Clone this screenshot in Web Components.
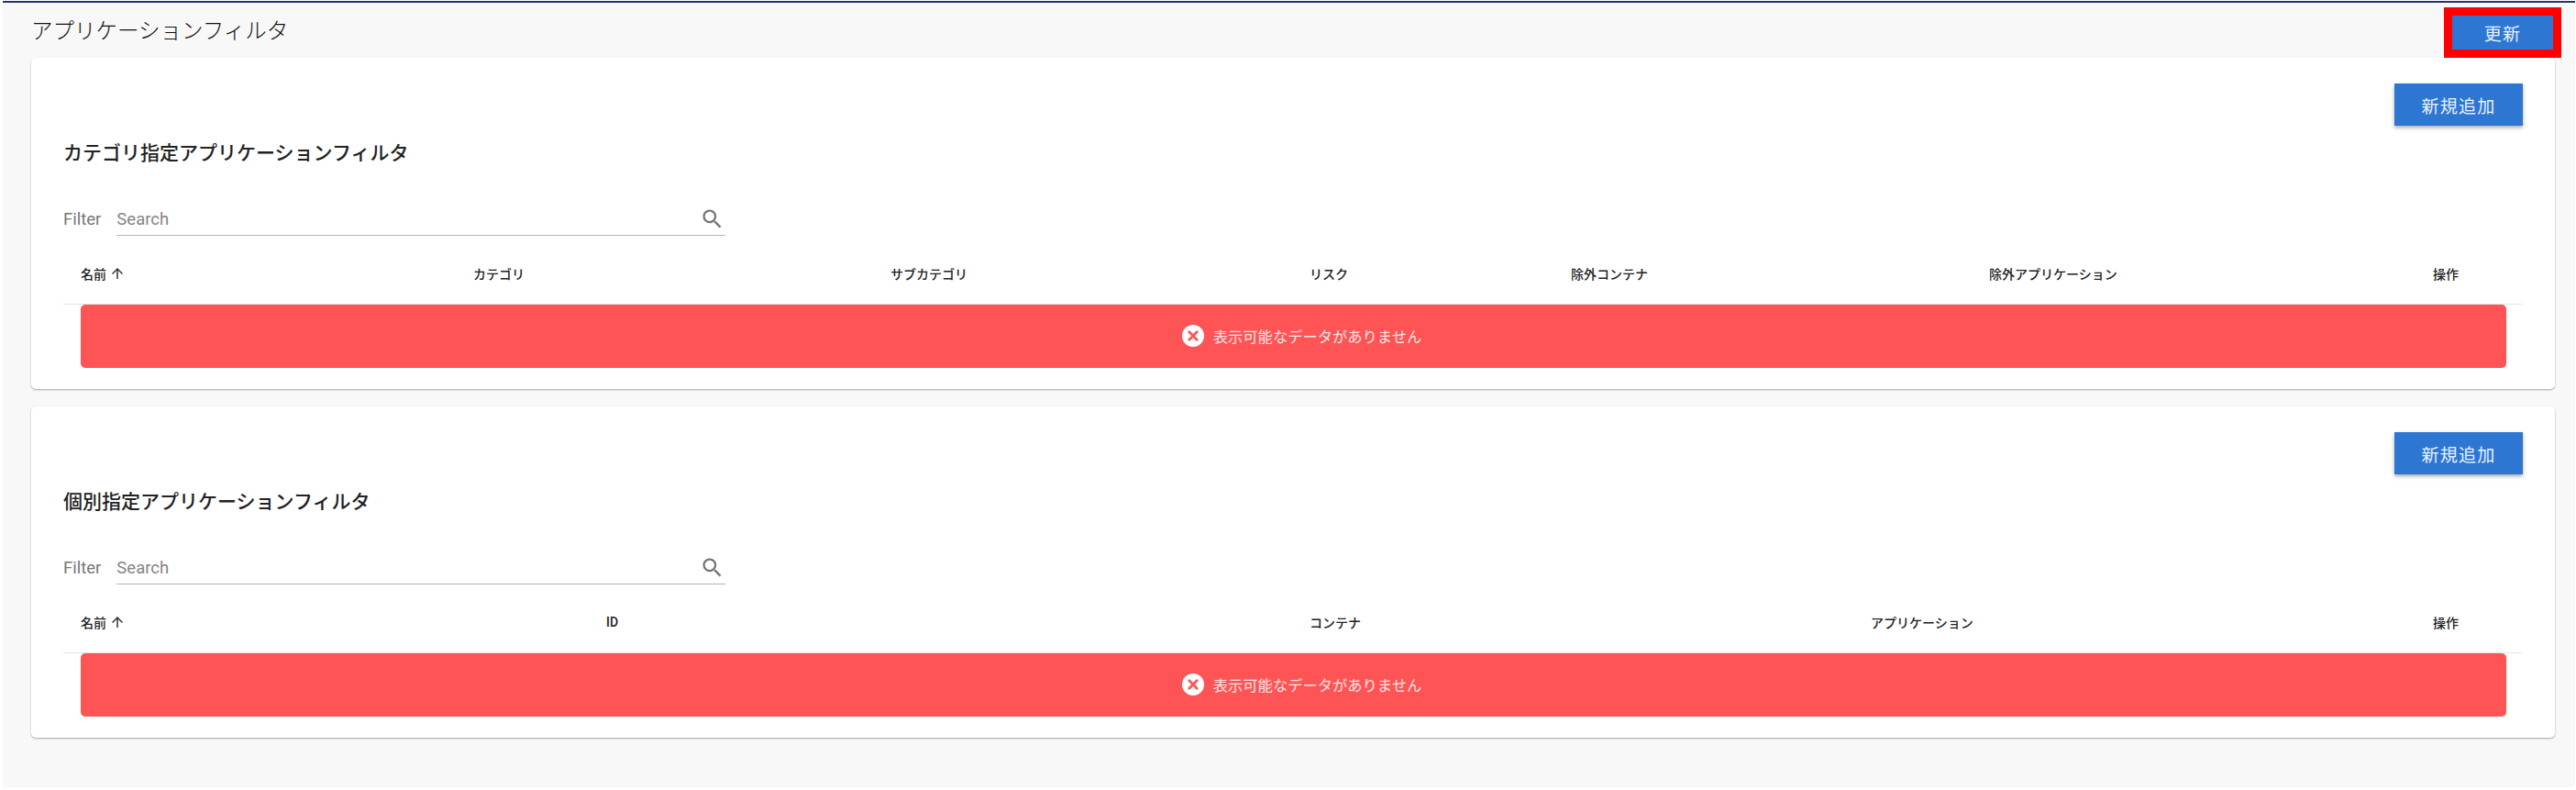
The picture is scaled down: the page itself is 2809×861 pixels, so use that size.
<!DOCTYPE html>
<html lang="ja">
<head>
<meta charset="utf-8">
<title>アプリケーションフィルタ</title>
<style>
    html, body
    {
        margin          : 0;
        background      : #ffffff;
        font-family     : Roboto, "Noto Sans CJK JP", sans-serif;
    }
</style>
</head>
<body>

<filter-page>
    <span slot="title">アプリケーションフィルタ</span>
    <primary-button slot="action" outlined>更新</primary-button>

    <filter-card heading="カテゴリ指定アプリケーションフィルタ">
        <data-table columns="428px 455px 457px 285px 456px 484px 1fr"
                    labels="名前,カテゴリ,サブカテゴリ,リスク,除外コンテナ,除外アプリケーション,操作"></data-table>
    </filter-card>

    <filter-card heading="個別指定アプリケーションフィルタ">
        <data-table columns="573px 767px 612px 613px 1fr"
                    labels="名前,ID,コンテナ,アプリケーション,操作"></data-table>
    </filter-card>
</filter-page>

<script>
class FilterPage extends HTMLElement
{
    constructor()
    {
        super();
        this.shadowDOM = this.attachShadow({mode:"open"});
        this.shadowDOM.innerHTML =
        `
        <style>
            :host
            {
                display         : block;
                height          : 857px;
                margin          : 1px 1px 0 3px;
                box-sizing      : border-box;
                border-top      : 2px solid #25326e;
                background      : #f8f8f8;
            }

            .head
            {
                display         : flex;
                justify-content : space-between;
                align-items     : flex-start;
                height          : 60px;
                box-sizing      : border-box;
                padding         : 5px 15px 0 31px;
            }

            .title
            {
                font-size       : 23.5px;
                font-weight     : 300;
                line-height     : 52px;
                color           : #111111;
            }

            .cards
            {
                display         : flex;
                flex-direction  : column;
                gap             : 19px;
                padding         : 0 22px 0 31px;
            }
        </style>

        <div class="head">
            <div class="title"><slot name="title"></slot></div>
            <slot name="action"></slot>
        </div>
        <div class="cards"><slot></slot></div>`;
    }
}

class PrimaryButton extends HTMLElement
{
    constructor()
    {
        super();
        this.shadowDOM = this.attachShadow({mode:"open"});
        this.shadowDOM.innerHTML =
        `
        <style>
            :host
            {
                display         : inline-flex;
                align-items     : center;
                justify-content : center;
                width           : 140px;
                height          : 46px;
                box-sizing      : border-box;
                background      : #2d77d3;
                color           : #e9f1fb;
                font-size       : 19px;
                letter-spacing  : 1.2px;
                box-shadow      : 0 2px 4px rgba(0,0,0,.35);
            }

            :host([outlined])
            {
                width           : 128px;
                height          : 55px;
                border          : 9px solid #ff0000;
                box-shadow      : none;
            }
        </style>
        <slot></slot>`;
    }
}

class FilterCard extends HTMLElement
{
    constructor()
    {
        super();
        this.shadowDOM = this.attachShadow({mode:"open"});
        this.shadowDOM.innerHTML =
        `
        <style>
            :host
            {
                display         : block;
                height          : 361px;
                box-sizing      : border-box;
                padding         : 28px 35px 0 35px;
                background      : #ffffff;
                border-radius   : 5px;
                box-shadow      : 0 1px 2px rgba(0,0,0,.35);
            }

            .actions
            {
                display         : flex;
                justify-content : flex-end;
            }

            h2
            {
                margin          : 15px 0 0 0;
                font-size       : 21px;
                font-weight     : 500;
                line-height     : 30px;
                color           : #222222;
            }
        </style>

        <div class="actions"><primary-button>新規追加</primary-button></div>
        <h2></h2>
        <search-filter></search-filter>
        <slot></slot>`;

        this.shadowDOM.querySelector("h2").textContent = this.getAttribute("heading");
    }
}

class SearchFilter extends HTMLElement
{
    constructor()
    {
        super();
        this.shadowDOM = this.attachShadow({mode:"open"});
        this.shadowDOM.innerHTML =
        `
        <style>
            :host
            {
                display         : flex;
                align-items     : stretch;
                gap             : 17px;
                width           : 722px;
                height          : 35px;
                margin-top      : 40px;
                font-size       : 18.5px;
                color           : #777777;
            }

            .label
            {
                line-height     : 34px;
            }

            .field
            {
                flex            : 1;
                display         : flex;
                justify-content : space-between;
                align-items     : center;
                padding-right   : 1px;
                border-bottom   : 1.5px solid #b4b4b4;
                color           : #858585;
            }

            svg
            {
                width           : 27.4px;
                height          : 27.4px;
                fill            : #757575;
            }
        </style>

        <span class="label">Filter</span>
        <div class="field">
            <span>Search</span>
            <svg viewBox="0 0 24 24"><path d="M15.5 14h-.79l-.28-.27A6.47 6.47 0 0 0 16 9.5 6.5 6.5 0 1 0 9.5 16c1.61 0 3.09-.59 4.23-1.57l.27.28v.79l5 4.99L20.49 19l-4.99-5zm-6 0C7.01 14 5 11.99 5 9.5S7.01 5 9.5 5 14 7.01 14 9.5 11.99 14 9.5 14z"/></svg>
        </div>`;
    }
}

class DataTable extends HTMLElement
{
    constructor()
    {
        super();
        this.shadowDOM = this.attachShadow({mode:"open"});
    }

    connectedCallback()
    {
        this.render();
    }

    render()
    {
        const labels = this.getAttribute("labels").split(",");
        const cells = labels.map((label, i) =>
        {
            const arrow = i === 0
                ? `<svg viewBox="0 0 24 24"><path d="M4 12l1.41 1.41L11 7.83V20h2V7.83l5.58 5.59L20 12l-8-8-8 8z"/></svg>`
                : "";
            return `<div class="cell">${label}${arrow}</div>`;
        }).join("");

        this.shadowDOM.innerHTML =
        `
        <style>
            :host
            {
                display         : block;
            }

            .header
            {
                display         : grid;
                grid-template-columns : ${this.getAttribute("columns")};
                height          : 75px;
                box-sizing      : border-box;
                padding         : 0 0 0 19px;
                border-bottom   : 1px solid #e4e4e4;
                font-size       : 14px;
                font-weight     : 500;
                color           : #222222;
            }

            .cell
            {
                display         : flex;
                align-items     : center;
                gap             : 3px;
                padding-top     : 7px;
            }

            svg
            {
                width           : 18px;
                height          : 18px;
                fill            : #333333;
            }
        </style>

        <div class="header">${cells}</div>
        <empty-alert>表示可能なデータがありません</empty-alert>`;
    }
}

class EmptyAlert extends HTMLElement
{
    constructor()
    {
        super();
        this.shadowDOM = this.attachShadow({mode:"open"});
        this.shadowDOM.innerHTML =
        `
        <style>
            :host
            {
                display         : flex;
                justify-content : center;
                align-items     : center;
                gap             : 10px;
                height          : 68.5px;
                margin          : 0 18px 0 19px;
                padding         : 0 0 1px 18px;
                box-sizing      : border-box;
                background      : #fe5455;
                border-radius   : 5px;
                color           : #ffe4e4;
                font-size       : 16.3px;
            }

            svg
            {
                width           : 24px;
                height          : 24px;
            }
        </style>

        <svg viewBox="0 0 24 24">
            <circle cx="12" cy="12" r="12" fill="#ffffff"/>
            <path d="M7.8 7.8l8.4 8.4M16.2 7.8l-8.4 8.4" stroke="#fe5455" stroke-width="2.8" stroke-linecap="round"/>
        </svg>
        <span><slot></slot></span>`;
    }
}

customElements.define("primary-button",PrimaryButton);
customElements.define("search-filter",SearchFilter);
customElements.define("empty-alert",EmptyAlert);
customElements.define("data-table",DataTable);
customElements.define("filter-card",FilterCard);
customElements.define("filter-page",FilterPage);
</script>
</body>
</html>
